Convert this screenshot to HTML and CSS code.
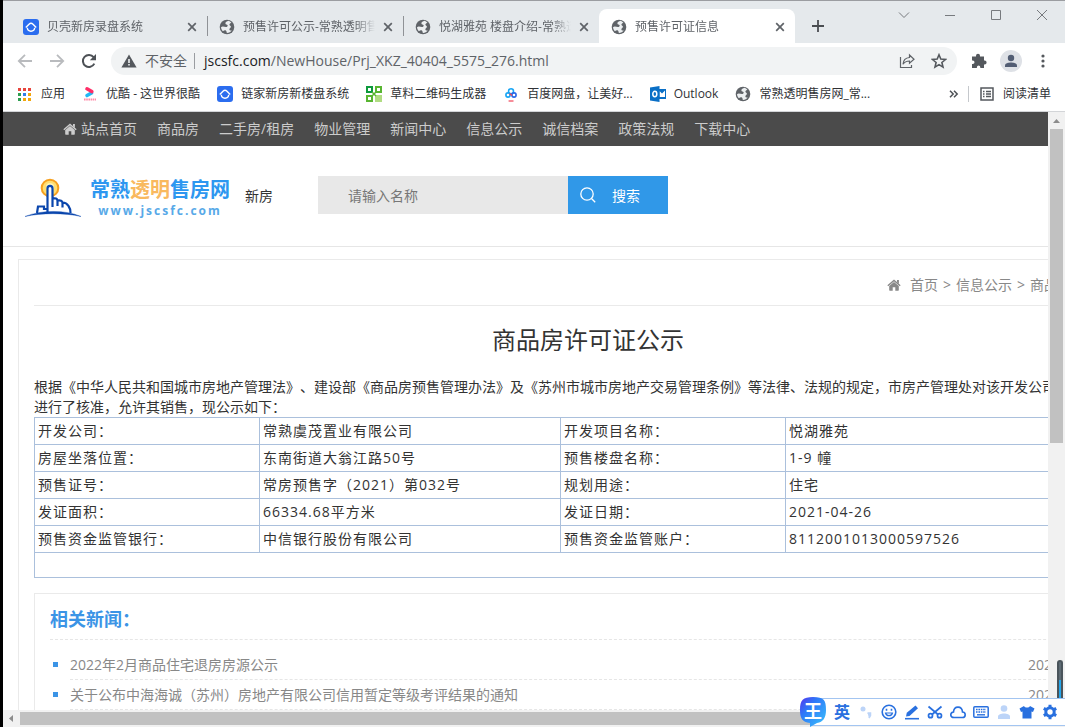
FILE: index.html
```html
<!DOCTYPE html>
<html lang="zh-CN">
<head>
<meta charset="utf-8">
<title>预售许可证信息</title>
<link rel="stylesheet" href="styles.css">
</head>
<body>
<svg class="defs" aria-hidden="true">
  <symbol id="globe" viewBox="0 0 16 16"><circle cx="8" cy="8" r="7.300" fill="#5f6368"/><path d="M9.500 1.800C8 2.200 6.200 3 6.400 4.600c.2 1.200 1.800.8 2.300 1.800.2.900-.8 1.500-1.700 1.600C5.500 8 3.500 6.800 2 8.200c.2 1.700.9 3 2 4 .9-.9 2.300-1.300 3.100-.5.600.7.300 1.500.9 2.200 2 0 3.600-.9 4.700-2.400-1.400.4-2.500-.4-2.300-1.500.2-1 1.400-1.300 1.500-2.300 0-1-1.400-1.100-1.500-2.200 0-1 1.200-1.300 2-1.800-.8-1-1.800-1.600-2.900-1.900z" fill="#eceff1"/></symbol>
  <symbol id="beike" viewBox="0 0 16 16"><rect width="16" height="16" rx="3" fill="#2b6def"/><path d="M4.300 8.800c.3 4.600 7.100 4.600 7.400 0" fill="none" stroke="#fff" stroke-width="1.400"/><path d="M2.800 8.400L6 5.300c1.200-1.200 2.800-1.200 4 0l3.200 3.100" fill="none" stroke="#fff" stroke-width="1.400"/></symbol>
  <symbol id="cross" viewBox="0 0 10 10"><path d="M1.200 1.200l7.600 7.600M8.800 1.200L1.200 8.800" stroke="#5f6368" stroke-width="1.700"/></symbol>
  <symbol id="home" viewBox="0 0 14 12"><path d="M7 2.900l4.800 4v4.200c0 .4-.2.600-.6.600H8.300V8.200H5.700v3.500H2.800c-.4 0-.6-.2-.6-.6V6.900z" fill="currentColor"/><path d="M.8 6.800L7 1.500l6.200 5.300" fill="none" stroke="currentColor" stroke-width="1.400"/><path d="M10 1h1.900v4L10 3.300z" fill="currentColor"/></symbol>
</svg>
<div class="desktop">
<div class="browser">
  <header class="tabstrip">
    <div class="tab"><svg class="fav"><use href="#beike"/></svg><span class="tab-title">贝壳新房录盘系统</span><button class="close" aria-label="关闭标签"><svg><use href="#cross"/></svg></button></div>
    <div class="tab split"><svg class="fav"><use href="#globe"/></svg><span class="tab-title">预售许可公示-常熟透明售</span><button class="close" aria-label="关闭标签"><svg><use href="#cross"/></svg></button></div>
    <div class="tab split"><svg class="fav"><use href="#globe"/></svg><span class="tab-title">悦湖雅苑 楼盘介绍-常熟透</span><button class="close" aria-label="关闭标签"><svg><use href="#cross"/></svg></button></div>
    <div class="tab active"><svg class="fav"><use href="#globe"/></svg><span class="tab-title">预售许可证信息</span><button class="close" aria-label="关闭标签"><svg><use href="#cross"/></svg></button></div>
    <button class="newtab" aria-label="新标签页"><svg viewBox="0 0 12 12"><path d="M6 0v12M0 6h12" stroke="#4a4d51" stroke-width="1.800"/></svg></button>
    <div class="winctl">
      <button aria-label="搜索标签"><svg viewBox="0 0 12 12"><path d="M1 3.500l5 5 5-5"/></svg></button>
      <button aria-label="最小化"><svg viewBox="0 0 12 12"><path d="M1 6.500h10"/></svg></button>
      <button aria-label="最大化"><svg viewBox="0 0 12 12"><path d="M1.500 1.500h9v9h-9z"/></svg></button>
      <button aria-label="关闭"><svg viewBox="0 0 12 12"><path d="M1 1l10 10M11 1L1 11"/></svg></button>
    </div>
  </header>

  <div class="toolbar">
    <button class="tool" aria-label="后退"><svg viewBox="0 0 16 16"><path d="M15 8H2M8 1.800L1.800 8 8 14.200" fill="none" stroke="#b9bbbe" stroke-width="1.800"/></svg></button>
    <button class="tool" aria-label="前进"><svg viewBox="0 0 16 16"><path d="M1 8h13M8 1.800L14.200 8 8 14.200" fill="none" stroke="#b9bbbe" stroke-width="1.800"/></svg></button>
    <button class="tool" aria-label="重新加载"><svg viewBox="0 0 16 16"><path d="M13.300 10.600A6 6 0 1 1 12.600 4.200" fill="none" stroke="#4d5156" stroke-width="2"/><path d="M15 1v6.200H8.800z" fill="#4d5156"/></svg></button>
    <div class="omnibox">
      <svg class="warn" viewBox="0 0 16 14"><path d="M8 .5L15.600 13.500H.4z" fill="#54585d"/><path d="M7.200 5h1.600v4H7.200zM7.200 10h1.600v1.600H7.200z" fill="#f1f3f4"/></svg>
      <span class="insecure">不安全</span>
      <span class="url"><b>jscsfc.com</b>/NewHouse/Prj_XKZ_40404_5575_276.html</span>
      <button class="tool" aria-label="分享"><svg viewBox="0 0 16 16" fill="none" stroke="#5f6368" stroke-width="1.200"><path d="M1.500 4v10.500h11V12"/><path d="M10.500 2L15 6.200l-4.500 4V8C8 8 5.500 8.800 4 11.300 4.300 7.300 6.800 4.800 10.500 4.500z"/></svg></button>
      <button class="tool" aria-label="收藏"><svg viewBox="0 0 16 16"><path d="M8 1.800l1.800 4.300 4.700.4-3.600 3 1.100 4.600L8 11.600l-4 2.500 1.100-4.600-3.600-3 4.700-.4z" fill="none" stroke="#54585d" stroke-width="1.600"/></svg></button>
    </div>
    <button class="tool" aria-label="扩展程序"><svg viewBox="0 0 16 16"><path d="M1 3.500h4V2.800a2 2 0 0 1 4 0v.7h4v4h.6a2 2 0 0 1 0 4H13V15H9.300v-.8a1.700 1.700 0 0 0-3.400 0v.8H1v-4h.8a1.700 1.700 0 0 0 0-3.400H1z" fill="#54585d"/></svg></button>
    <button class="tool" aria-label="用户"><svg class="avatar" viewBox="0 0 22 22"><circle cx="11" cy="11" r="11" fill="#dee1e6"/><circle cx="11" cy="8" r="3.200" fill="#525d73"/><path d="M5 17v-1.500C5 13.300 8.500 12.500 11 12.500s6 .8 6 3V17z" fill="#525d73"/></svg></button>
    <button class="tool" aria-label="菜单"><svg viewBox="0 0 16 16" fill="#54585d"><circle cx="8" cy="3" r="1.600"/><circle cx="8" cy="8" r="1.600"/><circle cx="8" cy="13" r="1.600"/></svg></button>
  </div>

  <nav class="bookmarks">
    <a href="#"><svg viewBox="0 0 16 16"><path d="M1 2h3v3H1zM6 2h3v3H6zM11 2h3v3h-3z" fill="#e8453c"/><path d="M1 7h3v3H1zM1 12h3v3H1z" fill="#2e9e50"/><path d="M6 7h3v3H6z" fill="#2f7de9"/><path d="M11 7h3v3h-3zM6 12h3v3H6zM11 12h3v3h-3z" fill="#f2a60c"/></svg>应用</a>
    <a href="#"><svg viewBox="0 0 16 16"><path d="M5 9.500L9.500 7" stroke="#23b8f5" stroke-width="3.600" stroke-linecap="round"/><path d="M5 2.800L9.800 5.500" stroke="#ff2d67" stroke-width="3.600" stroke-linecap="round"/><path d="M2 13.500h12" stroke="#ff8aa8" stroke-width="1.800" stroke-dasharray="1.600 .6"/></svg>优酷 - 这世界很酷</a>
    <a href="#"><svg><use href="#beike"/></svg>链家新房新楼盘系统</a>
    <a href="#"><svg viewBox="0 0 16 16" fill="none" stroke-width="2"><path d="M1 1h5v5H1z" stroke="#0d9a3c"/><path d="M10 1h5v5h-5z" stroke="#58b531"/><path d="M1 10h5v5H1z" stroke="#58b531"/><path d="M9 9h7v7H9z" fill="#b0dc82"/><path d="M6 6l4 4M10 6l-4 4" stroke="#58b531" stroke-width="1.500"/></svg>草料二维码生成器</a>
    <a href="#"><svg viewBox="0 0 16 16" fill="none" stroke-width="1.600"><circle cx="8" cy="5.200" r="2.500" stroke="#17a5f5"/><circle cx="5" cy="9" r="2.100" stroke="#17a5f5"/><circle cx="11" cy="9" r="2.100" stroke="#2868e8"/><path d="M6.500 7.500L9 9.500" stroke="#f04155"/><path d="M5.500 15h5" stroke="#f04155" stroke-width="1.200"/></svg>百度网盘，让美好...</a>
    <a href="#"><svg viewBox="0 0 16 16"><path d="M8 3h8v10H8z" fill="#0a6fc6"/><path d="M9.500 5l2.500 2.500L15 4.500V11H9.500z" fill="#fff"/><path d="M0 1.500L9.500 0v16L0 14.500z" fill="#0a6fc6"/><ellipse cx="4.800" cy="8" rx="2" ry="2.700" fill="none" stroke="#fff" stroke-width="1.500"/></svg>Outlook</a>
    <a href="#"><svg><use href="#globe"/></svg>常熟透明售房网_常...</a>
    <button class="more" aria-label="更多书签"><svg viewBox="0 0 10 10"><path d="M1 1.800L4.200 5 1 8.200M5 1.800L8.200 5 5 8.200" fill="none" stroke="#4d5156" stroke-width="1.500"/></svg></button>
    <a href="#" class="reading"><svg viewBox="0 0 16 16"><path d="M2 2h12v12H2z" fill="none" stroke="#54585d" stroke-width="1.500"/><path d="M4 5.500h1.500M4 8h1.500M4 10.500h1.500M7 5.500h5M7 8h5M7 10.500h5" stroke="#54585d" stroke-width="1.300"/></svg>阅读清单</a>
  </nav>

  <div class="viewport">
    <div class="page">
      <nav class="sitenav">
        <a href="#"><svg class="home"><use href="#home"/></svg>站点首页</a><a href="#">商品房</a><a href="#">二手房/租房</a><a href="#">物业管理</a><a href="#">新闻中心</a><a href="#">信息公示</a><a href="#">诚信档案</a><a href="#">政策法规</a><a href="#">下载中心</a>
      </nav>
      <div class="masthead">
        <a class="logo" href="#">
          <svg viewBox="0 0 58 44"><circle cx="26" cy="11" r="8.300" fill="#ffdf72" stroke="#f7a01e" stroke-width="2"/><circle cx="26" cy="10" r="4" fill="#fff3b5"/><path d="M23 36V12c0-4 6-4 6 0v10l5 1.500V36z" fill="#fff"/><path d="M23.500 36V11.500c0-3.500 5-3.500 5 0V30M28.500 21.500c3-.6 5 0 5 2.500v5M33.500 23.500c3-.6 5 .3 5 2.500v4.500M38.500 25.500c3 0 4.500 1 6 3.500 1.500 2 2 3 2 7M23.500 32h-3.500v-2.500h-6L13 36" fill="none" stroke="#0b46ad" stroke-width="2.200"/><path d="M1 39.500c16-6.500 40-7 56 0-16-3.800-40-3.800-56 0z" fill="#0b46ad" stroke="#0b46ad" stroke-width=".4"/></svg>
          <span class="brand"><span class="name">常熟<em>透明</em>售房网</span><span class="domain">www.jscsfc.com</span></span>
        </a>
        <span class="kind">新房</span>
        <form class="search">
          <input type="text" placeholder="请输入名称" aria-label="请输入名称">
          <button type="button"><svg viewBox="0 0 16 16"><circle cx="7" cy="7" r="6.200"/><path d="M11.500 11.500l3.700 3.700"/></svg>搜索</button>
        </form>
      </div>

      <main class="panel">
        <div class="crumbs"><svg class="home"><use href="#home"/></svg><a href="#">首页</a> &gt; <a href="#">信息公示</a> &gt; <a href="#">商品房许可证公示</a></div>
        <h1>商品房许可证公示</h1>
        <p>根据《中华人民共和国城市房地产管理法》、建设部《商品房预售管理办法》及《苏州市城市房地产交易管理条例》等法律、法规的规定，市房产管理处对该开发公司<br>进行了核准，允许其销售，现公示如下：</p>
        <table>
          <colgroup><col class="c-label"><col class="c-value"><col class="c-label"><col></colgroup>
          <tbody>
          <tr><td>开发公司：</td><td>常熟虞茂置业有限公司</td><td>开发项目名称：</td><td>悦湖雅苑</td></tr>
          <tr><td>房屋坐落位置：</td><td>东南街道大翁江路50号</td><td>预售楼盘名称：</td><td>1-9 幢</td></tr>
          <tr><td>预售证号：</td><td>常房预售字（2021）第032号</td><td>规划用途：</td><td>住宅</td></tr>
          <tr><td>发证面积：</td><td>66334.68平方米</td><td>发证日期：</td><td>2021-04-26</td></tr>
          <tr><td>预售资金监管银行：</td><td>中信银行股份有限公司</td><td>预售资金监管账户：</td><td>8112001013000597526</td></tr>
          <tr class="blank"><td colspan="4"></td></tr>
          </tbody>
        </table>
        <section class="news">
          <h2>相关新闻：</h2>
          <ul>
            <li><a href="#">2022年2月商品住宅退房房源公示</a><time>2022-03-01</time></li>
            <li><a href="#">关于公布中海海诚（苏州）房地产有限公司信用暂定等级考评结果的通知</a><time>2022-02-25</time></li>
          </ul>
        </section>
      </main>
    </div>
    <div class="vbar"><svg viewBox="0 0 17 17"><path d="M5 11l3.500-4 3.500 4z"/></svg><div class="vthumb"></div></div>
    <div class="hbar"><svg viewBox="0 0 17 17"><path d="M10 5v7L6 8.500z"/></svg><div class="hthumb"></div></div>
  </div>
</div>

<div class="meter"></div>
<div class="ime">
  <span class="ime-logo"><svg viewBox="0 0 28 30"><defs><linearGradient id="g" x1="0" y1="0" x2="1" y2="1"><stop offset="0" stop-color="#5633ee"/><stop offset=".35" stop-color="#2e79f8"/><stop offset="1" stop-color="#3cc4fb"/></linearGradient></defs><path d="M14 0c11 0 13 3 13 13 0 8-3 12-9 13l-7 4v-4C3 25 1 21 1 13 1 3 4 0 14 0z" fill="url(#g)"/></svg><span>王</span></span>
  <button class="lang">英</button>
  <button class="dim" aria-label="标点"><svg viewBox="0 0 16 16"><circle cx="5" cy="5" r="2.500" fill="currentColor"/><path d="M9.500 9h3v2.500L11 14" stroke="currentColor" stroke-width="1.500" fill="currentColor"/></svg></button>
  <button aria-label="表情"><svg viewBox="0 0 16 16" fill="none" stroke="currentColor" stroke-width="1.600"><circle cx="8" cy="8" r="6.800"/><path d="M4.500 9c.8 3.500 6.200 3.500 7 0z" stroke-width="1.200"/><path d="M5.500 4.700v2M10.500 4.700v2"/></svg></button>
  <button aria-label="手写"><svg viewBox="0 0 16 16"><path d="M2 12.500l.8-3.700L11.500 1.500l2.500 2.700L5.500 12z" fill="currentColor"/><path d="M1 14.700h14" stroke="currentColor" stroke-width="1.600"/></svg></button>
  <button aria-label="截图"><svg viewBox="0 0 16 16" fill="none" stroke="currentColor" stroke-width="1.700"><path d="M1.500 2.500l9.500 8M14.500 2.500L5 10.500"/><circle cx="3.500" cy="11.700" r="2"/><circle cx="12.500" cy="11.700" r="2"/></svg></button>
  <button aria-label="云"><svg viewBox="0 0 16 16"><path d="M4 13.500C-.2 13.500-.2 8.500 3.500 8c.5-6.500 8.500-6.500 9 0 3.700.3 3.500 5.500 0 5.500z" fill="none" stroke="currentColor" stroke-width="1.600"/></svg></button>
  <button aria-label="键盘"><svg viewBox="0 0 16 16" fill="none" stroke="currentColor"><rect x=".8" y="2.800" width="14.400" height="10.400" rx="1" stroke-width="1.500"/><path d="M3 5.500h10M3 8h10" stroke-width="1.400" stroke-dasharray="1.600 .8"/><path d="M4 10.800h8" stroke-width="1.400"/></svg></button>
  <button class="dim" aria-label="账户"><svg viewBox="0 0 16 16" fill="currentColor"><circle cx="8" cy="4.500" r="3.300"/><path d="M2 15v-2.500C2 8.500 14 8.500 14 12.500V15z"/></svg></button>
  <button aria-label="皮肤"><svg viewBox="0 0 16 16" fill="currentColor"><path d="M5 2c1 2 5 2 6 0l4.500 2.500L14 8l-1.500-.5V14.500h-9V7.500L2 8 .5 4.500z"/></svg></button>
  <button aria-label="设置"><svg viewBox="0 0 16 16" fill="none" stroke="currentColor"><circle cx="8" cy="8" r="4.200" stroke-width="3"/><path d="M8 .8v3M8 12.200v3M1.800 4.400l2.600 1.500M11.600 10.100l2.600 1.500M1.800 11.600l2.600-1.500M11.600 5.900l2.600-1.500" stroke-width="3"/></svg></button>
</div>
</div>
</body>
</html>
```
FILE: styles.css
```css
* { box-sizing: border-box; }
body {
  margin: 0;
  font-family: "Open Sans", "Noto Sans CJK SC", sans-serif;
  font-size: 14px;
  color: #333;
  text-spacing-trim: space-all;
}
a { color: inherit; text-decoration: none; }
button { border: 0; padding: 0; background: none; font: inherit; color: inherit; }
svg { display: block; flex: none; width: 16px; height: 16px; }
.defs { position: absolute; width: 0; height: 0; }

.desktop { position: relative; height: 100vh; padding-left: 3px; background: #000; overflow: hidden; }
.browser { display: flex; flex-direction: column; height: 100%; background: #fff; border-top: 1px solid #9b9da1; }

/* Tabs */
.tabstrip { display: flex; align-items: flex-end; flex: none; height: 42px; padding-left: 8px; background: #e5e9ec; }
.tab { position: relative; display: flex; align-items: center; gap: 8px; flex: 0 1 196px; min-width: 0; height: 34px; padding: 1px 10px 0 12px; font-size: 12px; line-height: 16px; color: #5f6368; }
.split::before { content: ""; position: absolute; left: 0; top: 7px; width: 1px; height: 20px; background: #8f9296; }
.tab.active { background: #fff; border-radius: 8px 8px 0 0; }
.tab-title { flex: 1; min-width: 0; overflow: hidden; white-space: nowrap; mask-image: linear-gradient(to right, #000 calc(100% - 20px), transparent); }
.close svg { width: 10px; height: 10px; }
.newtab { width: 46px; height: 34px; display: grid; place-items: center; }
.newtab svg { width: 12px; height: 12px; }
.winctl { display: flex; align-self: flex-start; margin-left: auto; }
.winctl button { display: grid; place-items: center; width: 46px; height: 28px; }
.winctl svg { width: 12px; height: 12px; fill: none; stroke: #777a7e; stroke-width: 1; }

/* Address bar */
.toolbar { display: flex; align-items: center; flex: none; height: 36px; padding: 0 6px; }
.tool { display: grid; place-items: center; flex: none; width: 32px; height: 28px; }
.tool .avatar { width: 22px; height: 22px; }
.omnibox { display: flex; align-items: center; flex: 1; min-width: 0; height: 28px; margin: 0 6px; padding: 0 2px 0 10px; border-radius: 14px; background: #f1f3f4; color: #5f6368; line-height: 20px; }
.insecure { margin-left: 8px; padding-right: 7px; border-right: 1px solid #9a9da1; line-height: 16px; }
.url { flex: 1; min-width: 0; padding-left: 9px; overflow: hidden; white-space: nowrap; }
.url b { font-weight: 400; color: #202124; }
.warn { height: 14px; }

/* Bookmarks */
.bookmarks { display: flex; align-items: center; gap: 17px; flex: none; height: 33px; padding: 0 14px 2px; border-bottom: 1px solid #d3d5d8; font-size: 12px; line-height: 16px; color: #303236; white-space: nowrap; }
.bookmarks a { display: flex; align-items: center; gap: 8px; }
.more { margin-left: auto; }
.more svg { width: 10px; height: 10px; }
.bookmarks .reading { margin-left: -8px; padding-left: 10px; border-left: 1px solid #c5c8cc; }

/* Scrolling area */
.viewport { display: grid; grid-template: minmax(0, 1fr) 17px / minmax(0, 1fr) 17px; flex: 1; min-height: 0; }
.page { overflow: hidden; }
.vbar { display: flex; flex-direction: column; align-items: center; grid-row: 1 / 3; grid-column: 2; background: #f1f1f1; }
.vbar svg, .hbar svg { width: 17px; height: 17px; fill: #8c8c8c; }
.vthumb { width: 13px; height: 51%; background: #c1c1c1; }
.hbar { display: flex; align-items: center; background: #f1f1f1; }
.hthumb { width: 86%; height: 13px; background: #c1c1c1; }

/* Site header */
.sitenav { display: flex; gap: 20px; padding-left: 60px; background: #4b4b4b; color: #ccc; line-height: 34px; white-space: nowrap; }
.sitenav a { display: flex; align-items: center; gap: 4px; }
.home { width: 14px; height: 12px; }
.masthead { display: flex; align-items: center; height: 101px; padding: 0 0 2px 21px; border-bottom: 1px solid #e6e6e6; }
.logo { display: flex; align-items: center; gap: 8px; margin-top: 8px; }
.logo svg { width: 58px; height: 44px; }
.brand { display: flex; flex-direction: column; align-items: center; width: 140px; font-weight: 700; color: #2d97f0; }
.name { font-size: 20px; line-height: 24px; }
.name em { font-style: normal; color: #f9b95f; }
.domain { font-size: 12px; line-height: 18px; letter-spacing: 2px; color: #58a9e8; }
.kind { margin-left: 15px; }
.search { display: flex; height: 38px; margin-left: 45px; }
.search input { width: 250px; padding: 0 30px; border: 0; border-radius: 0; background: #e8e8e8; font: inherit; }
.search input::placeholder { color: #777; }
.search button { display: flex; align-items: center; gap: 16px; width: 100px; padding-left: 12px; background: #3098e8; color: #fff; }
.search svg { fill: none; stroke: #fff; stroke-width: 1.3; }

/* Notice */
.panel { width: 1140px; margin: 12px 0 0 15px; padding: 0 15px; border: 1px solid #eaeaea; }
.crumbs { display: flex; align-items: center; justify-content: flex-end; gap: 5px; height: 46px; padding-top: 5px; border-bottom: 1px solid #eaeaea; color: #888; line-height: 20px; white-space: nowrap; }
.crumbs .home { margin-right: 4px; }
h1 { margin: 0; font-size: 24px; font-weight: 400; line-height: 68px; text-align: center; }
p { margin: 3px 0 0; line-height: 20px; white-space: nowrap; }
table { width: 100%; table-layout: fixed; border-collapse: collapse; line-height: 20px; letter-spacing: 1px; }
.c-label { width: 225px; }
.c-value { width: 301px; }
td { height: 27px; padding: 3px; border: 1px solid #abc0dc; }
.blank td { height: 25px; padding: 0; }
.news { margin-top: 15px; padding: 0 15px; border: 1px solid #eaeaea; }
h2 { margin: 0; font-size: 18px; line-height: 26px; padding: 12px 0 7px; color: #3b94e6; border-bottom: 1px dashed #e6e6e6; }
ul { margin: 10px 0 0; padding: 0 0 10px 20px; list-style: none; }
li { position: relative; display: flex; justify-content: space-between; padding-right: 25px; border-bottom: 1px dashed #e6e6e6; line-height: 29px; color: #888; }
li::before { content: ""; position: absolute; left: -17px; top: 12px; width: 5px; height: 5px; background: #3b94e6; }

/* Floating widgets */
.meter { position: absolute; right: 2px; bottom: 28px; width: 6px; height: 39px; border: 2px solid #4a545b; border-bottom: 0; border-radius: 3px 3px 0 0; background: linear-gradient(#5d6b74 18px, #24a5ea 18px); }
.ime { position: absolute; right: 0; bottom: 1px; display: flex; align-items: center; height: 28px; padding-right: 4px; border: solid #a3c5f1; border-width: 1px 0; background: #fff; color: #2970df; }
.ime button { display: grid; place-items: center; width: 23px; height: 26px; }
.ime .lang { width: 24px; font-size: 16px; font-weight: 700; line-height: 24px; }
.ime .dim { color: #bcd4f8; }
.ime-logo { position: relative; width: 18px; height: 26px; }
.ime-logo svg { position: absolute; right: 3px; bottom: -2px; width: 28px; height: 30px; }
.ime-logo span { position: absolute; right: 8px; bottom: 2px; font-size: 18px; line-height: 24px; font-weight: 700; color: #fff; }
```
